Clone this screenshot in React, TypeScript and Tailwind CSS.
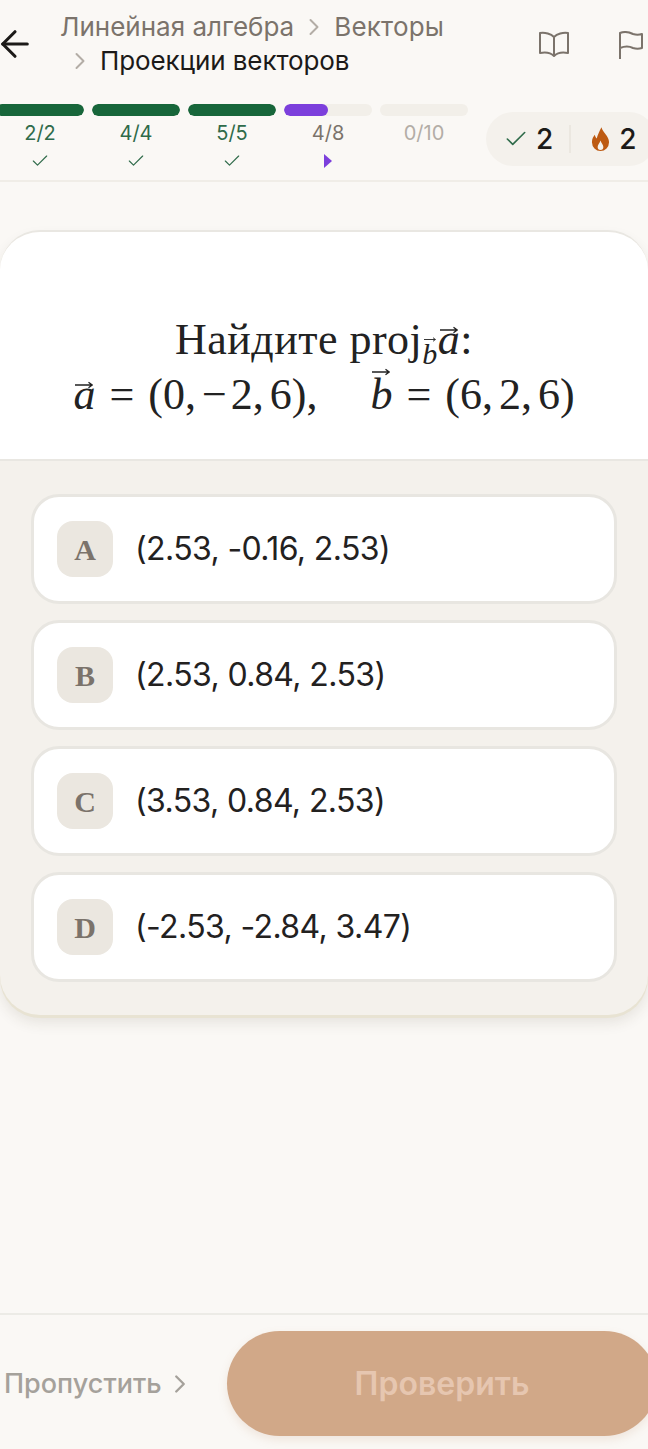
import { ArrowLeft, Check, ChevronRight } from 'lucide-react'

const steps = [
  { label: '2/2', done: true, fill: 100 },
  { label: '4/4', done: true, fill: 100 },
  { label: '5/5', done: true, fill: 100 },
  { label: '4/8', done: false, fill: 50, active: true },
  { label: '0/10', done: false, fill: 0 },
]

const options = [
  { key: 'A', text: '(2.53, -0.16, 2.53)' },
  { key: 'B', text: '(2.53, 0.84, 2.53)' },
  { key: 'C', text: '(3.53, 0.84, 2.53)' },
  { key: 'D', text: '(-2.53, -2.84, 3.47)' },
]

function Vec({ letter, small }: { letter: string; small?: boolean }) {
  return (
    <span className="relative inline-block italic leading-none">
      {letter}
      <svg
        viewBox="0 0 20 8"
        fill="none"
        stroke="#222"
        strokeWidth="1.5"
        className={
          small
            ? 'absolute left-[2px] top-[-2px] h-[5px] w-[12px]'
            : letter === 'b'
              ? 'absolute left-[2px] top-[-5px] h-[8px] w-[18px]'
              : 'absolute left-[2px] top-[8px] h-[8px] w-[18px]'
        }
      >
        <path d="M0 4h19M15 1l4 3-4 3" />
      </svg>
    </span>
  )
}

export default function App() {
  return (
    <div className="flex h-[1449px] w-[648px] flex-col overflow-hidden bg-[#faf8f5] font-['Inter',sans-serif]">
      <header className="h-[182px] shrink-0 border-b-2 border-[#f0ede7]">
        <div className="flex h-[104px] items-start">
          <ArrowLeft className="ml-[-6px] mt-[23px] shrink-0 text-[#1c1a18]" size={42} strokeWidth={1.8} />
          <div className="ml-[24px] mt-[10px] w-[400px] text-[26px] leading-[34px] text-[#7b736b]">
            <div className="flex items-center">
              <span>Линейная алгебра</span>
              <ChevronRight className="mx-[6px] text-[#b3ada6]" size={28} strokeWidth={1.7} />
              <span className="tracking-[0.2px]">Векторы</span>
            </div>
            <div className="flex items-center pl-[6px]">
              <ChevronRight className="mr-[6px] text-[#b3ada6]" size={28} strokeWidth={1.7} />
              <span className="tracking-[-0.1px] text-[#1c1a18]">Проекции векторов</span>
            </div>
          </div>
          <svg viewBox="0 0 30 27" fill="none" stroke="#7b736b" strokeWidth="2" strokeLinejoin="round" className="ml-[79px] mt-[31px] h-[27px] w-[30px] shrink-0">
            <path d="M15 6C12 3 6 1 1 2V22C6 21 12 22 15 25C18 22 24 21 29 22V2C24 1 18 3 15 6ZM15 6V25" />
          </svg>
          <svg viewBox="0 0 24 28" fill="none" stroke="#7b736b" strokeWidth="2" strokeLinejoin="round" className="ml-[50px] mt-[31px] h-[28px] w-[24px] shrink-0">
            <path d="M1 28V2C6 0 10 1 14 3C17 4 20 4 23 3V17C20 18 17 18 14 17C10 15 6 15 1 17" />
          </svg>
        </div>
        <div className="flex items-start">
          <div className="ml-[-4px] flex gap-[8px]">
            {steps.map((step) => (
              <div key={step.label} className="flex w-[88px] flex-col items-center">
                <div className="h-[12px] w-full overflow-hidden rounded-full bg-[#f2efe9]">
                  <div
                    className={`h-full rounded-full ${step.active ? 'bg-[#7c3fdc]' : 'bg-[#17663a]'}`}
                    style={{ width: `${step.fill}%` }}
                  />
                </div>
                <span
                  className={`mt-[5px] text-[20px] leading-[24px] ${
                    step.done ? 'text-[#2f6b4a]' : step.active ? 'text-[#7b736b]' : 'text-[#b3ada6]'
                  }`}
                >
                  {step.label}
                </span>
                <div className="mt-[6px] flex h-[20px] items-center">
                  {step.done && <Check className="text-[#2f6b4a]" size={20} strokeWidth={1.4} />}
                  {step.active && <span className="h-0 w-0 border-y-[7px] border-l-[8px] border-y-transparent border-l-[#7c3fdc]" />}
                </div>
              </div>
            ))}
          </div>
          <div className="ml-[18px] mt-[8px] flex h-[54px] w-[170px] shrink-0 items-center rounded-full bg-[#f4f1ec] pl-[17px]">
            <Check className="text-[#2f6b4a]" size={26} strokeWidth={1.5} />
            <span className="ml-[7px] text-[28px] font-medium text-[#1c1a18]">2</span>
            <span className="ml-[16px] h-[28px] w-[2px] bg-[#ebe7e0]" />
            <svg viewBox="0 0 20 26" className="ml-[20px] h-[25px] w-[19px]">
              <path
                fill="#bd5a12"
                fillRule="evenodd"
                d="M11 0c1 5 8 9 8 16a9 9 0 0 1-18 0c0-4 1.500-6 3-8 .5 2 1 3 2 4 1-4 3-8 5-12ZM10 14c-1 3-3 4.500-3 7a3 3 0 0 0 6 0c0-2.500-2-4-3-7Z"
              />
            </svg>
            <span className="ml-[9px] text-[28px] font-medium text-[#1c1a18]">2</span>
          </div>
        </div>
      </header>

      <main className="mt-[48px] h-[785px] shrink-0 overflow-hidden rounded-[40px] border-t-2 border-[#e9e7e2] bg-[#f4f1ec] shadow-[0_3px_0_#e8e3d3,0_8px_14px_rgba(60,50,30,0.10)]">
        <section className="flex h-[229px] flex-col items-center justify-end border-b-2 border-[#e9e7e2] bg-white pb-[37px] font-['Liberation_Serif',serif] text-[44px] leading-[55px] text-[#222]">
          <div className="tracking-[0.5px]">
            Найдите proj
            <sub className="relative bottom-[-10px] text-[30px] leading-none">
              <Vec letter="b" small />
            </sub>
            <Vec letter="a" />:
          </div>
          <div className="whitespace-nowrap">
            <Vec letter="a" />
            <span className="mx-[14px]">=</span>(0,
            <span className="ml-[6px] mr-[4px]">−</span>2,
            <span className="ml-[6px]">6</span>),
            <span className="ml-[53px]" />
            <Vec letter="b" />
            <span className="mx-[14px]">=</span>(6,
            <span className="ml-[6px]">2</span>,
            <span className="ml-[6px]">6</span>)
          </div>
        </section>
        <section className="flex flex-col gap-[16px] px-[31px] pt-[33px]">
          {options.map((option) => (
            <div
              key={option.key}
              className="flex h-[110px] items-center rounded-[28px] border-[3px] border-[#e8e6e1] bg-white pl-[23px]"
            >
              <span className="flex h-[56px] w-[56px] items-center justify-center rounded-[16px] bg-[#ebe7e0] font-['Liberation_Serif',serif] text-[30px] font-bold text-[#7b736b]">
                {option.key}
              </span>
              <span className="ml-[22px] text-[32px] tracking-[-0.6px] text-[#23211f]">{option.text}</span>
            </div>
          ))}
        </section>
      </main>

      <footer className="mt-[298px] flex h-[135px] shrink-0 items-start border-t-2 border-[#ecebe6]">
        <div className="ml-[4px] mt-[51px] flex items-center text-[#a5a19b]">
          <span className="w-[158px] text-[27px] font-medium leading-[36px]">Пропустить</span>
          <ChevronRight className="ml-[3px]" size={30} strokeWidth={1.9} />
        </div>
        <button className="ml-[32px] mt-[16px] flex h-[105px] w-[430px] shrink-0 items-center justify-center rounded-full bg-[#d1a888] text-[32px] font-semibold text-[#e6c6b0] shadow-[0_4px_10px_rgba(180,130,90,0.15)]">
          Проверить
        </button>
      </footer>
    </div>
  )
}
